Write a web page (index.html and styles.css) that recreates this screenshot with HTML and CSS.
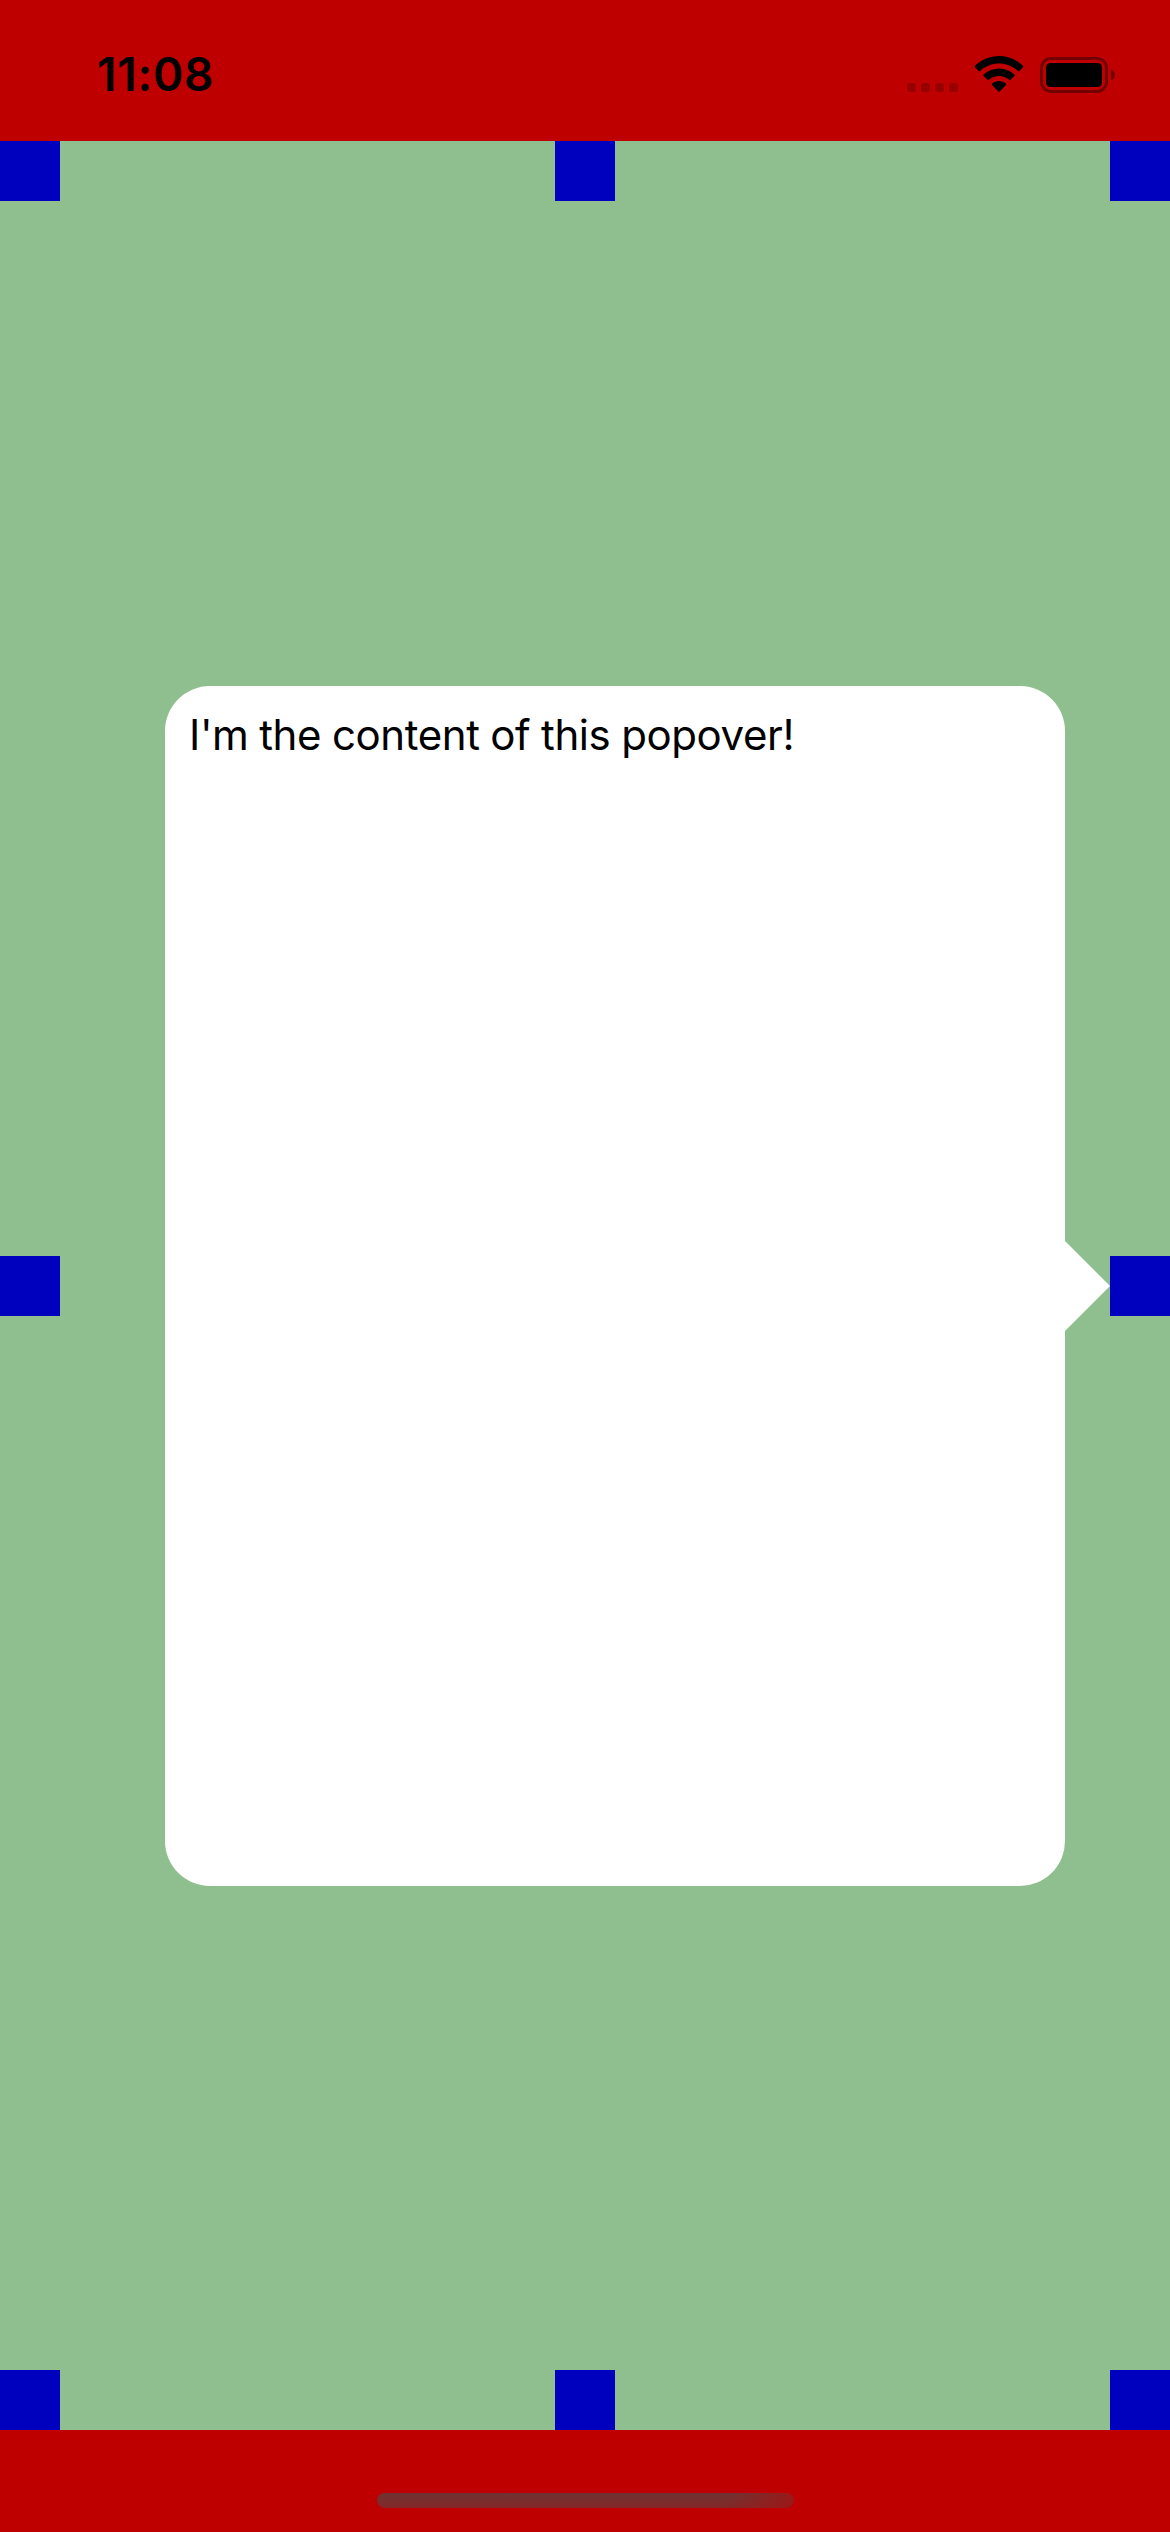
FILE: index.html
```html
<!DOCTYPE html>
<html lang="en">
<head>
<meta charset="utf-8">
<title>Popover</title>
<link rel="stylesheet" href="styles.css">
</head>
<body>
<div class="screen">
  <header class="status-bar">
    <time class="clock">11:08</time>
    <div class="indicators">
      <svg class="signal" width="51" height="9" viewBox="0 0 51 9">
        <rect width="9" height="9" rx="2.5"/>
        <rect x="14" width="9" height="9" rx="2.5"/>
        <rect x="28" width="9" height="9" rx="2.5"/>
        <rect x="42" width="9" height="9" rx="2.5"/>
      </svg>
      <svg class="wifi" width="50" height="36" viewBox="0 0 50 36">
        <path d="M25 0C34 0 42.500 3.500 49 9.800Q49.600 10.500 49 11.200L45.300 15Q44.600 15.600 43.900 15C38.700 10.100 32 7.500 25 7.500S11.300 10.100 6.100 15Q5.400 15.600 4.700 15L1 11.200Q.4 10.500 1 9.800C7.500 3.500 16 0 25 0Z"/>
        <path d="M25 12.500C30.800 12.500 36.200 14.700 40.400 18.600Q41 19.300 40.400 20L36.600 23.800Q35.900 24.400 35.200 23.800C32.400 21.300 28.800 20 25 20S17.600 21.300 14.800 23.800Q14.100 24.400 13.400 23.800L9.600 20Q9 19.300 9.600 18.600C13.800 14.700 19.200 12.500 25 12.500Z"/>
        <path d="M25 25C27.600 25 30 25.900 31.900 27.400Q32.600 28.200 31.900 28.900L25.700 35.400Q25 36 24.300 35.400L18.100 28.900Q17.400 28.200 18.100 27.400C20 25.900 22.400 25 25 25Z"/>
      </svg>
      <svg class="battery" width="75" height="36" viewBox="0 0 75 36">
        <rect class="battery-shell" x="1.500" y="1.500" width="65" height="33" rx="9.500"/>
        <path class="battery-cap" d="M71 12.500C73.500 13.500 75 15.500 75 18S73.500 22.500 71 23.500Z"/>
        <rect x="6" y="6" width="56" height="24" rx="4.500"/>
      </svg>
    </div>
  </header>
  <main class="content">
    <div class="anchors"><i class="anchor"></i><i class="anchor"></i><i class="anchor"></i></div>
    <div class="anchors"><i class="anchor"></i><i class="anchor"></i></div>
    <div class="anchors"><i class="anchor"></i><i class="anchor"></i><i class="anchor"></i></div>
    <section class="popover">
      <p class="popover-text">I'm the content of this popover!</p>
    </section>
  </main>
  <footer class="bottom-bar"><div class="home-indicator"></div></footer>
</div>
</body>
</html>
```
FILE: styles.css
```css
* { box-sizing: border-box; }

body {
  margin: 0;
  background: #bf0000;
  color: #000;
  font-family: Inter, "Liberation Sans", sans-serif;
}

.screen {
  display: flex;
  flex-direction: column;
  width: 1170px;
  height: 2532px;
  overflow: hidden;
}

.status-bar {
  display: flex;
  justify-content: space-between;
  height: 141px;
  padding: 46px 55px 0 97px;
}

.clock {
  font-size: 46px;
  line-height: 56px;
  font-weight: 600;
  letter-spacing: 0.8px;
}

.indicators {
  display: flex;
  align-items: flex-end;
  height: 46px;
}

.signal { opacity: .2; margin-right: 16px; }
.wifi { margin-right: 16px; }
.battery { margin-bottom: -1px; }
.battery-shell { fill: none; stroke: #000; stroke-width: 3; opacity: .4; }
.battery-cap { opacity: .4; }

.content {
  position: relative;
  display: flex;
  flex-direction: column;
  justify-content: space-between;
  height: 2289px;
  background: #8fbf8f;
}

.anchors {
  display: flex;
  justify-content: space-between;
}

.anchor {
  width: 60px;
  height: 60px;
  background: #0000bf;
}

.popover {
  position: absolute;
  top: 545px;
  left: 165px;
  width: 900px;
  height: 1200px;
  padding: 24px;
  border-radius: 45px;
  background: #fff;
}

.popover::after {
  content: "";
  position: absolute;
  top: 555px;
  left: 100%;
  width: 45px;
  height: 90px;
  background: #fff;
  clip-path: polygon(0 0, 100% 50%, 0 100%);
}

.popover-text {
  margin: 0;
  font-size: 42px;
  line-height: 50px;
  letter-spacing: -0.4px;
  word-spacing: -0.6px;
  white-space: nowrap;
}

.bottom-bar {
  display: flex;
  justify-content: center;
  height: 102px;
  padding-top: 63px;
}

.home-indicator {
  width: 417px;
  height: 15px;
  border-radius: 8px;
  background:
    linear-gradient(105deg, rgba(154, 24, 24, 0) 84%, #9a1818 100%),
    linear-gradient(#703232, #832828);
}
```
